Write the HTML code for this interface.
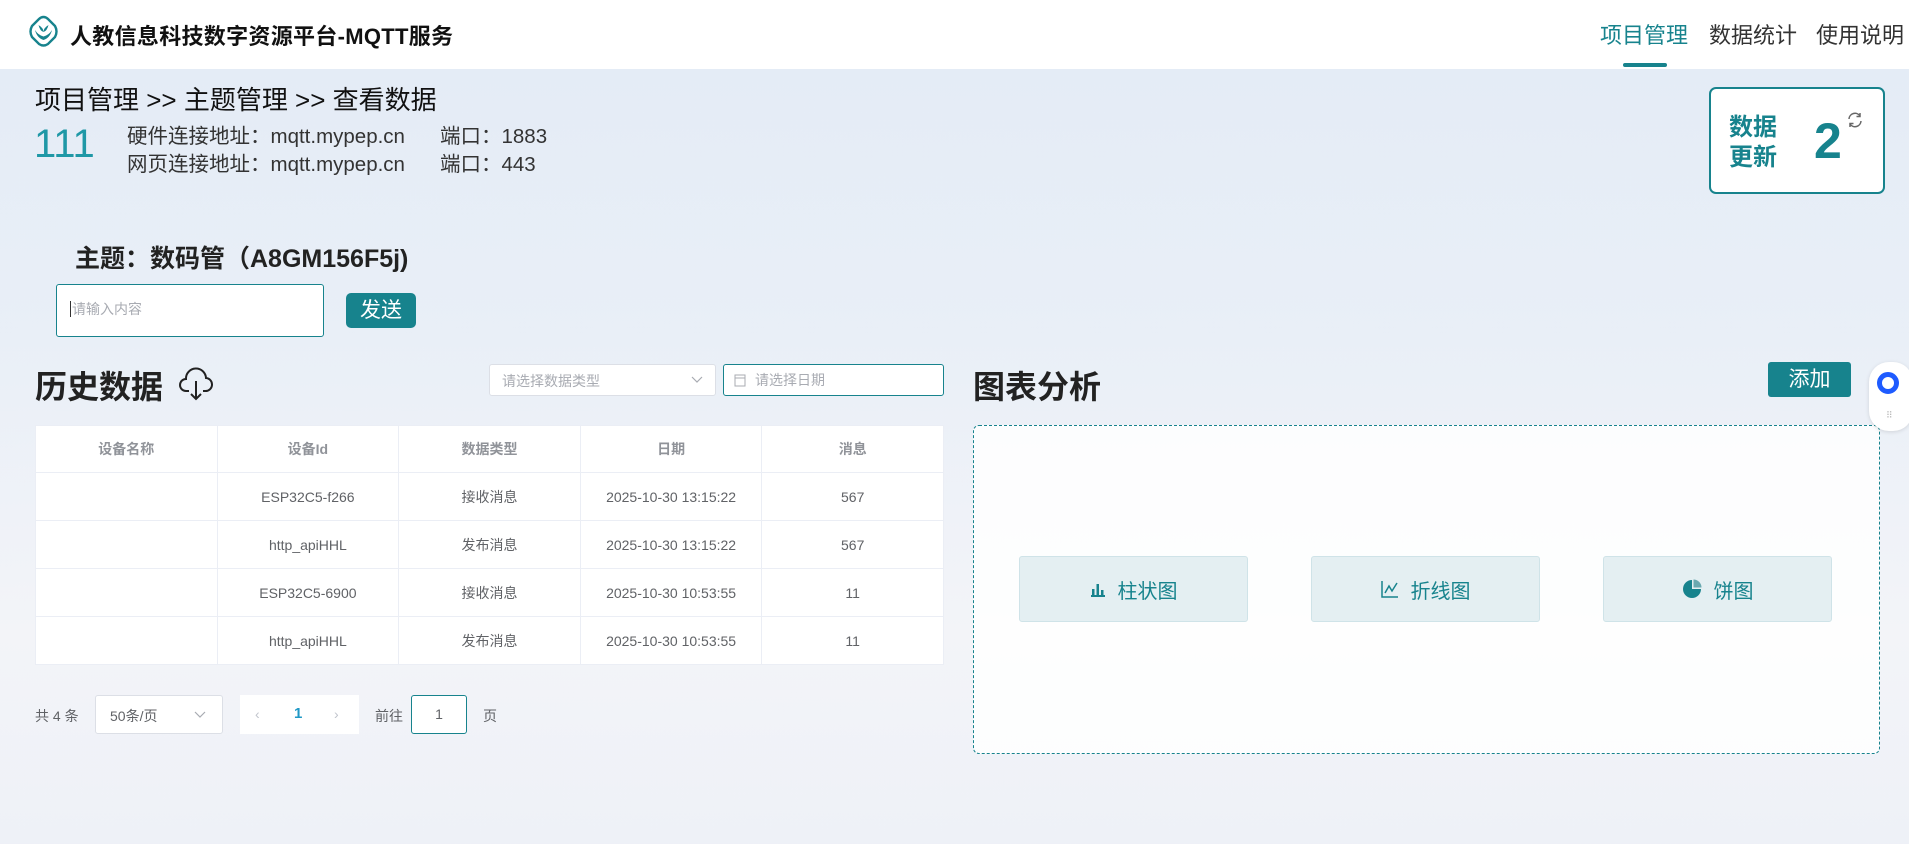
<!DOCTYPE html>
<html><head><meta charset="utf-8"><style>
*{box-sizing:border-box;margin:0;padding:0}
body{width:1909px;height:844px;overflow:hidden;font-family:"Liberation Sans","Noto Sans CJK SC",sans-serif;color:#303133;position:relative;
background:linear-gradient(180deg,#e3ebf6 0%,#e9eff7 40%,#f3f4f8 75%,#eef1f7 100%);}
.abs{position:absolute}
.hdr{left:0;top:0;width:1909px;height:69px;background:#fff}
.title{left:70px;top:19px;font-size:22px;font-weight:bold;color:#111;letter-spacing:0.3px}
.nav{top:18px;font-size:22px;color:#333}
.teal{color:#17838d}
table{border-collapse:collapse;width:909px;background:#fff;font-size:14px;color:#606266}
td,th{border:1px solid #ebeef5;text-align:center;height:48px;width:182px}
th{height:47px;color:#909399;font-weight:bold;font-size:14px}
.cbtn{top:556px;width:229px;height:66px;background:#e4eff2;border:1px solid #cfe3e8;border-radius:3px;color:#17838d;font-size:20px;display:flex;align-items:center;justify-content:center;gap:12px}
</style></head><body>
<div class="abs hdr"></div>
<svg class="abs" style="left:28px;top:15px" width="31" height="33" viewBox="0 0 31 33"><path d="M15.5 2 Q18 2 20 4 L27 11 Q30 16.5 27 22 L20 29 Q15.5 32 11 29 L4 22 Q1 16.5 4 11 L11 4 Q13 2 15.5 2Z" fill="none" stroke="#17838d" stroke-width="2.4"/><path d="M10.5 10 Q15.5 13 15.5 17 Q15.5 13 20.5 10 Q19 16 15.5 17 Q12 16 10.5 10Z" fill="#17838d"/><path d="M7 15 Q9 23 15.5 25 Q22 23 24 15 Q21 20 15.5 21.5 Q10 20 7 15Z" fill="#17838d"/></svg>
<div class="abs title">人教信息科技数字资源平台-MQTT服务</div>
<div class="abs nav teal" style="left:1600px">项目管理</div>
<div class="abs" style="left:1623px;top:63px;width:44px;height:4px;border-radius:2px;background:#17838d"></div>
<div class="abs nav" style="left:1709px">数据统计</div>
<div class="abs nav" style="left:1816px">使用说明</div>

<div class="abs" style="left:35px;top:80px;font-size:26px;color:#111">项目管理 &gt;&gt; 主题管理 &gt;&gt; 查看数据</div>
<div class="abs" style="left:34px;top:122px;font-size:40px;color:#1f98a6">111</div>
<div class="abs" style="left:127px;top:123px;font-size:20.5px;color:#333;line-height:28px">硬件连接地址：mqtt.mypep.cn<br>网页连接地址：mqtt.mypep.cn</div>
<div class="abs" style="left:440px;top:123px;font-size:20.5px;color:#333;line-height:28px">端口：1883<br>端口：443</div>

<div class="abs" style="left:1709px;top:87px;width:176px;height:107px;background:#fff;border:2px solid #17838d;border-radius:7px"></div>
<div class="abs teal" style="left:1729px;top:113px;font-size:24px;font-weight:bold;line-height:30px">数据<br>更新</div>
<div class="abs teal" style="left:1814px;top:112px;font-size:50px;font-weight:bold">2</div>
<svg class="abs" style="left:1846px;top:111px" width="18" height="18" viewBox="0 0 18 18" fill="none" stroke="#666" stroke-width="1.5"><path d="M3 8 A6 6 0 0 1 14 5"/><path d="M14 2 V5.5 H10.5"/><path d="M15 10 A6 6 0 0 1 4 13"/><path d="M4 16 V12.5 H7.5"/></svg>

<div class="abs" style="left:75px;top:239px;font-size:25px;font-weight:bold;color:#222">主题：数码管（A8GM156F5j)</div>
<div class="abs" style="left:56px;top:284px;width:268px;height:53px;background:#fff;border:1px solid #17838d;border-radius:3px"></div>
<div class="abs" style="left:70px;top:301px;font-size:14px;color:#a8abb2;border-left:1px solid #333;padding-left:1px;line-height:16px">请输入内容</div>
<div class="abs" style="left:346px;top:293px;width:70px;height:35px;background:#17838d;border-radius:5px;color:#fff;font-size:21px;text-align:center;line-height:35px">发送</div>

<div class="abs" style="left:35px;top:362px;font-size:32px;font-weight:bold;color:#222">历史数据</div>
<svg class="abs" style="left:178px;top:364px" width="36" height="38" viewBox="0 0 36 38" fill="none" stroke="#222" stroke-width="2"><path d="M11 27 H8 A6 6 0 0 1 8 15 A10 10 0 0 1 28 14 A6.5 6.5 0 0 1 27 27 H25"/><path d="M18 17 V35 M13 30 L18 35 L23 30"/></svg>
<div class="abs" style="left:489px;top:364px;width:227px;height:32px;background:#fff;border:1px solid #dcdfe6;border-radius:3px"></div>
<div class="abs" style="left:502px;top:371px;font-size:14px;color:#a8abb2">请选择数据类型</div>
<svg class="abs" style="left:691px;top:376px" width="12" height="8" viewBox="0 0 12 8" fill="none" stroke="#a8abb2" stroke-width="1.2"><path d="M1 1 L6 6 L11 1"/></svg>
<div class="abs" style="left:723px;top:364px;width:221px;height:32px;background:#fff;border:1px solid #17838d;border-radius:3px"></div>
<svg class="abs" style="left:734px;top:373px" width="12" height="14" viewBox="0 0 12 14" fill="none" stroke="#a8abb2"><rect x="1" y="2" width="10" height="11"/><path d="M1 5 H11"/></svg>
<div class="abs" style="left:755px;top:370px;font-size:14px;color:#a8abb2">请选择日期</div>

<table class="abs" style="left:35px;top:425px">
<tr><th>设备名称</th><th>设备Id</th><th>数据类型</th><th>日期</th><th>消息</th></tr>
<tr><td></td><td>ESP32C5-f266</td><td>接收消息</td><td>2025-10-30 13:15:22</td><td>567</td></tr>
<tr><td></td><td>http_apiHHL</td><td>发布消息</td><td>2025-10-30 13:15:22</td><td>567</td></tr>
<tr><td></td><td>ESP32C5-6900</td><td>接收消息</td><td>2025-10-30 10:53:55</td><td>11</td></tr>
<tr><td></td><td>http_apiHHL</td><td>发布消息</td><td>2025-10-30 10:53:55</td><td>11</td></tr>
</table>

<div class="abs" style="left:35px;top:706px;font-size:14px;color:#606266">共 4 条</div>
<div class="abs" style="left:95px;top:695px;width:128px;height:39px;background:#fff;border:1px solid #dcdfe6;border-radius:3px"></div>
<div class="abs" style="left:110px;top:706px;font-size:14px;color:#606266">50条/页</div>
<svg class="abs" style="left:194px;top:711px" width="12" height="8" viewBox="0 0 12 8" fill="none" stroke="#a8abb2" stroke-width="1.2"><path d="M1 1 L6 6 L11 1"/></svg>
<div class="abs" style="left:240px;top:695px;width:119px;height:39px;background:#fff"></div>
<div class="abs" style="left:255px;top:706px;font-size:14px;color:#c0c4cc">‹</div>
<div class="abs" style="left:294px;top:705px;font-size:15px;font-weight:bold;color:#1f98c6">1</div>
<div class="abs" style="left:334px;top:706px;font-size:14px;color:#c0c4cc">›</div>
<div class="abs" style="left:375px;top:706px;font-size:14px;color:#606266">前往</div>
<div class="abs" style="left:411px;top:695px;width:56px;height:39px;background:#fff;border:1px solid #17838d;border-radius:3px;text-align:center;line-height:37px;font-size:14px;color:#606266">1</div>
<div class="abs" style="left:483px;top:706px;font-size:14px;color:#606266">页</div>

<div class="abs" style="left:973px;top:362px;font-size:32px;font-weight:bold;color:#222">图表分析</div>
<div class="abs" style="left:1768px;top:362px;width:83px;height:35px;background:#17838d;border-radius:3px;color:#fff;font-size:21px;text-align:center;line-height:35px">添加</div>
<div class="abs" style="left:973px;top:425px;width:907px;height:329px;background:rgba(255,255,255,0.85);border:1px dashed #17838d;border-radius:6px"></div>
<div class="abs cbtn" style="left:1019px"><svg width="16" height="16" viewBox="0 0 16 16" fill="#17838d"><rect x="1" y="14" width="14" height="2"/><rect x="2" y="8" width="2.5" height="6"/><rect x="6.5" y="3" width="2.5" height="11"/><rect x="11" y="9" width="2.5" height="5"/></svg>柱状图</div>
<div class="abs cbtn" style="left:1311px"><svg width="18" height="18" viewBox="0 0 18 18" fill="none" stroke="#17838d" stroke-width="1.5"><path d="M1 1 V17 H17"/><path d="M4 13 L8 6 L11 11 L16 3"/></svg>折线图</div>
<div class="abs cbtn" style="left:1603px"><svg width="20" height="20" viewBox="0 0 20 20"><path d="M10 1 A9 9 0 1 0 19 10 H10 Z" fill="#17838d"/><path d="M11.5 0.5 V8.5 H19.5 A8 8 0 0 0 11.5 0.5Z" fill="#6aa9b0"/></svg>饼图</div>

<div class="abs" style="left:1869px;top:362px;width:44px;height:69px;background:#fff;border-radius:20px;box-shadow:0 1px 4px rgba(0,0,0,0.12)"></div>
<div class="abs" style="left:1877px;top:372px;width:22px;height:22px;border-radius:50%;border:5px solid #1e5bff"></div>
<div class="abs" style="left:1886px;top:410px;font-size:9px;color:#bbb;letter-spacing:-1px">⠿</div>
</body></html>
